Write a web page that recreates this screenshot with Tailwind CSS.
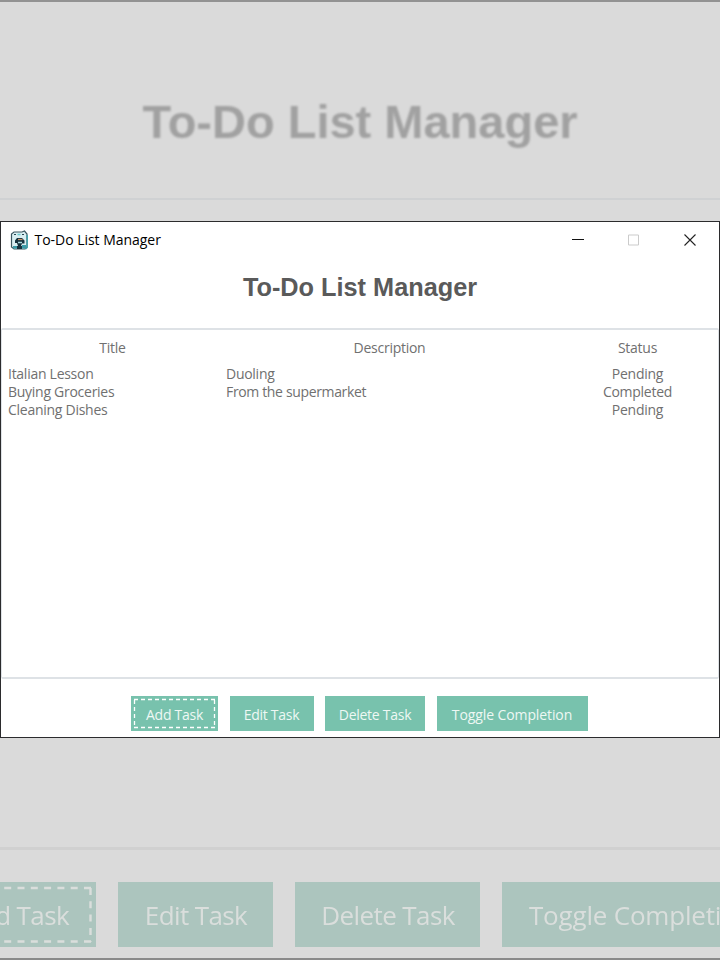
<!DOCTYPE html>
<html lang="en">
<head>
<meta charset="utf-8">
<title>To-Do List Manager</title>
<script src="https://cdn.jsdelivr.net/npm/@tailwindcss/browser@4"></script>
</head>
<body class="bg-[#dadada]">
<div class="w-[720px] h-[960px] overflow-hidden flex flex-col bg-[#dadada] font-['Open_Sans','Noto_Sans',sans-serif] whitespace-nowrap">
  <!-- Enlarged backdrop, upper part -->
  <div class="h-[221px] shrink-0 border-t-2 border-[#929292] flex flex-col">
    <div class="h-[198px] border-b-2 border-[#cfd1d3] flex justify-center pt-[93px]">
      <span class="font-['Liberation_Sans',sans-serif] font-bold text-[47px] leading-[54px] text-[#a1a1a1] blur-[0.8px]">To-Do List Manager</span>
    </div>
  </div>

  <!-- Application window -->
  <main class="h-[517px] shrink-0 border border-[#2b2b2d] bg-white flex flex-col text-[#707070]">
    <header class="h-[36px] shrink-0 flex items-center pl-[9px] text-black">
      <svg class="w-[19px] h-[20px]" viewBox="0 0 19 20">
        <path d="M4 2H12L14.500 1L17 4V17L15 19H4L1.500 17V4Z" fill="#d9eef1" stroke="#3b5660" stroke-width="1.200"/>
        <path d="M17.200 5V17.500L15.500 19" fill="none" stroke="#42a4ad" stroke-width="1.500"/>
        <path d="M4 4.500H6M12 4.500H14" stroke="#24454f" stroke-width="1.200"/>
        <path d="M7.500 4.500H10.500" stroke="#69cbd0" stroke-width="1.500"/>
        <path d="M5 10.500L7 8H12L14.500 10.500V13.500H12L11 16H8L7 13H5Z" fill="#15313d"/>
        <path d="M8 9.500H12.500" stroke="#c79067" stroke-width="1.200"/>
        <path d="M8 12.500H12" stroke="#a9d7dd" stroke-width="1.500"/>
        <path d="M3 16H7V18.500H3ZM12 15H16V18.500H12Z" fill="#399ba8"/>
        <path d="M7 16H12V19H7Z" fill="#18333f"/>
      </svg>
      <span class="ml-[5.500px] text-[14px] leading-[20px] tracking-[-0.030px]">To-Do List Manager</span>
      <svg class="ml-auto mr-[1px] w-[146px] h-[36px]" viewBox="0 0 146 36" fill="none">
        <path d="M0 17.500H12" stroke="#111"/>
        <path d="M56.500 13H66.500V23H56.500Z" stroke="#cbcbcb"/>
        <path d="M112.500 12.500L123.500 23.500M123.500 12.500L112.500 23.500" stroke="#222" stroke-width="1.100"/>
      </svg>
    </header>
    <h1 class="h-[70px] shrink-0 pt-[14px] text-center font-['Liberation_Sans',sans-serif] font-bold text-[25.300px] leading-[30px] text-[#5a5a5a]">To-Do List Manager</h1>
    <section class="h-[351px] shrink-0 border-2 border-[#dee2e6] border-x-[1px] rounded-[2px] text-[14px] tracking-[-0.270px] leading-[18px]">
      <div class="grid grid-cols-[218px_338px_160px] h-[35px] pt-[9px] text-center">
        <span class="pl-[3px]">Title</span><span class="pl-[1px]">Description</span><span class="pr-[1px]">Status</span>
      </div>
      <div class="grid grid-cols-[218px_338px_160px] auto-rows-[18px]">
        <span class="pl-[6px]">Italian Lesson</span><span class="pl-[6px]">Duoling</span><span class="text-center pr-[1px]">Pending</span>
        <span class="pl-[6px]">Buying Groceries</span><span class="pl-[6px] tracking-[-0.350px]">From the supermarket</span><span class="text-center pr-[1px]">Completed</span>
        <span class="pl-[6px]">Cleaning Dishes</span><span></span><span class="text-center pr-[1px]">Pending</span>
      </div>
    </section>
    <footer class="flex gap-[11.500px] pt-[17px] pl-[130px] text-[14px] tracking-[-0.270px] text-[#eef8f4]">
      <button class="w-[87px] h-[35px] pt-[1px] shrink-0 bg-[#78c2ad] grid place-items-center relative">Add Task
        <svg class="absolute inset-0 w-[87px] h-[35px]" fill="none"><path d="M3 3.500H84M3 31.500H84M3.500 4V32M83.500 4V32" stroke="#fff" stroke-width="1.300" stroke-dasharray="4 3"/></svg>
      </button>
      <button class="w-[84px] h-[35px] pt-[1px] shrink-0 bg-[#78c2ad]">Edit Task</button>
      <button class="w-[100px] h-[35px] pt-[1px] shrink-0 bg-[#78c2ad]">Delete Task</button>
      <button class="w-[151px] h-[35px] pt-[1px] shrink-0 bg-[#78c2ad] tracking-[-0.100px]">Toggle Completion</button>
    </footer>
  </main>

  <!-- Enlarged backdrop, lower part -->
  <div class="h-[222px] shrink-0 flex flex-col border-b-2 border-[#8a8a8a]">
    <div class="h-[112px] shrink-0 border-b-3 border-[#d0d0d0]"></div>
    <div class="flex gap-[22px] pt-[32px] ml-[-65px] text-[26px] tracking-[-0.600px] text-[#dadedc]">
      <div class="w-[161px] h-[65px] pt-[2px] pl-[2px] shrink-0 bg-[#acc5be] grid place-items-center relative"><span class="blur-[0.6px]">Add Task</span>
        <svg class="absolute inset-0 w-[161px] h-[65px]" fill="none"><path d="M156 6H5M156 59.500H5M155.500 6V60" stroke="#dadedc" stroke-width="2.400" stroke-dasharray="7 6.300"/></svg>
      </div>
      <div class="w-[155px] h-[65px] pt-[2px] pl-[1px] shrink-0 bg-[#acc5be] grid place-items-center"><span class="blur-[0.6px]">Edit Task</span></div>
      <div class="w-[185px] h-[65px] pt-[2px] pl-[1px] shrink-0 bg-[#acc5be] grid place-items-center"><span class="blur-[0.6px]">Delete Task</span></div>
      <div class="w-[281px] h-[65px] pt-[2px] pl-[27px] shrink-0 bg-[#acc5be] flex items-center tracking-[-0.200px]"><span class="blur-[0.6px]">Toggle Completion</span></div>
    </div>
  </div>
</div>
</body>
</html>
